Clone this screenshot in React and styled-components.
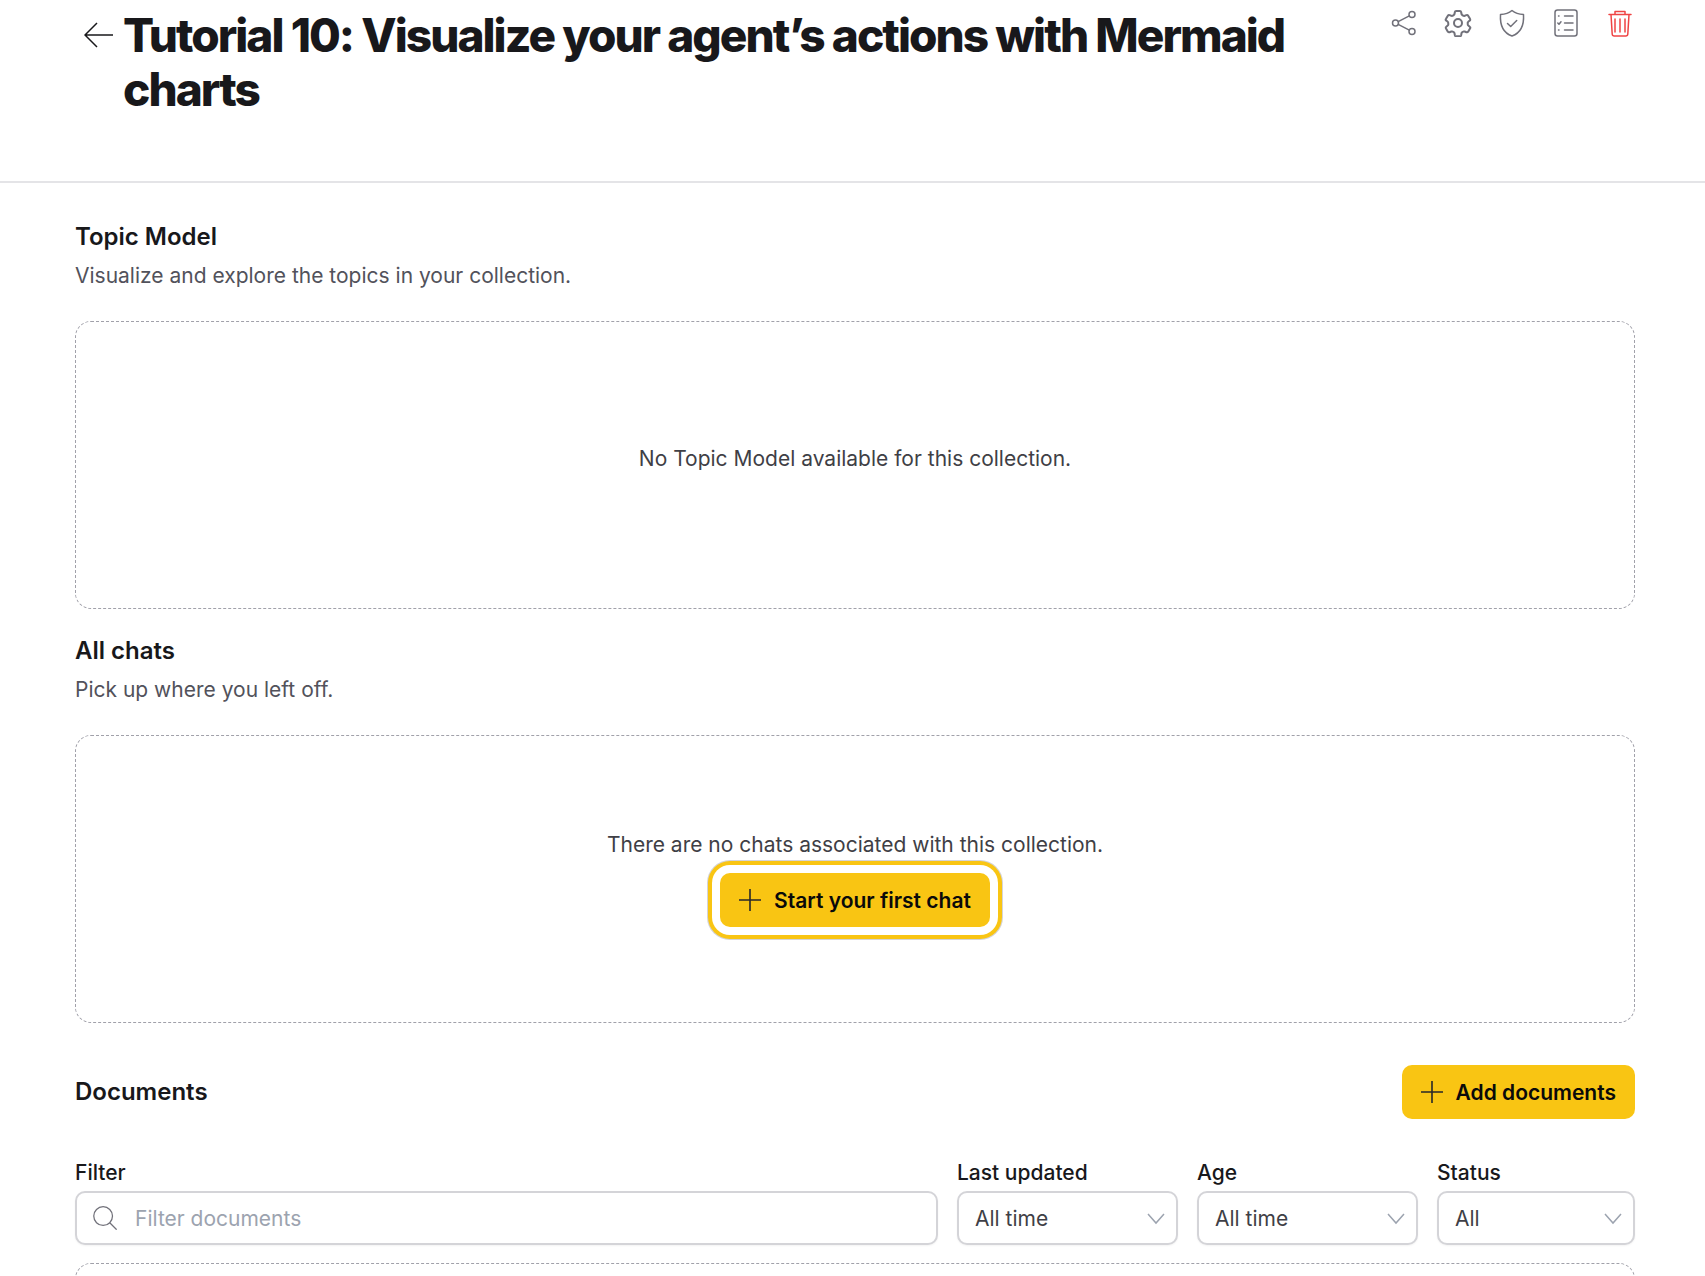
import React from 'react';
import styled, { createGlobalStyle } from 'styled-components';
import { HiOutlineMagnifyingGlass } from 'react-icons/hi2';

const Global = createGlobalStyle`
  html, body { margin: 0; padding: 0; background: #fff; height: 1276px; overflow: hidden; }
  body { font-family: Inter, "Liberation Sans", sans-serif; color: #18181b; }
  * { box-sizing: border-box; }
`;

const Header = styled.header`
  height: 183px;
  border-bottom: 2px solid #e4e4e7;
  padding: 8px 70px 0 84px;
  display: flex;
  align-items: flex-start;
`;
const BackIcon = styled.svg`
  width: 30px;
  height: 30px;
  margin-top: 12px;
  margin-right: 9px;
  flex: none;
  fill: none;
  stroke: #18181b;
  stroke-width: 1.5;
`;
const Title = styled.h1`
  margin: 0;
  width: 1240px;
  flex: none;
  font-size: 46px;
  line-height: 54px;
  font-weight: 800;
  letter-spacing: -0.0425em;
  color: #18181b;
`;
const Actions = styled.div`
  margin-left: auto;
  margin-right: 1px;
  margin-top: 1px;
  display: flex;
  gap: 26px;
`;
const ActionIcon = styled.svg`
  width: 28px;
  height: 28px;
  flex: none;
  fill: none;
  stroke: ${p => (p.$danger ? '#ef4444' : '#71717a')};
  stroke-width: 1.5;
  stroke-linecap: round;
  stroke-linejoin: round;
`;

const Main = styled.main`
  padding: 38px 70px 0 75px;
`;
const SectionTitle = styled.h2`
  margin: 0;
  font-size: 24px;
  line-height: 32px;
  font-weight: 600;
  color: #18181b;
`;
const SectionText = styled.p`
  margin: 8px 0 0;
  font-size: 21px;
  line-height: 30px;
  color: #52525b;
`;
const EmptyBox = styled.div`
  margin-top: ${p => p.$mt || 30}px;
  height: ${p => p.$h || 288}px;
  padding-bottom: ${p => p.$pb || 0}px;
  border: 1px dashed #a1a1aa;
  border-radius: 16px;
  display: flex;
  flex-direction: column;
  align-items: center;
  justify-content: center;
  font-size: 21px;
  line-height: 28px;
  color: #3f3f46;
`;
const ChatsSection = styled.section`
  margin-top: 26px;
`;
const DocsHead = styled.div`
  margin-top: 42px;
  display: flex;
  justify-content: space-between;
  align-items: center;
`;
const YellowButton = styled.button`
  height: 54px;
  padding: 0 19px 0 16px;
  display: inline-flex;
  align-items: center;
  gap: 10px;
  border: 0;
  border-radius: 10px;
  background: #f9c513;
  color: #0a0a0a;
  font: 600 21px Inter, sans-serif;
  ${p => p.$ring && `
    margin-top: 14px;
    box-shadow: 0 0 0 8px #fff, 0 0 0 12px #f9c513, 0 0 0 13px #d4d4d8;
  `}
`;
const PlusIcon = styled.svg`
  width: 28px;
  height: 28px;
  stroke: #27272a;
  stroke-width: 1.6;
  fill: none;
`;
const Filters = styled.div`
  margin-top: 40px;
  display: flex;
  gap: 19px;
`;
const Field = styled.label`
  display: flex;
  flex-direction: column;
  width: ${p => (p.$w ? `${p.$w}px` : 'auto')};
  flex: ${p => (p.$w ? 'none' : 1)};
`;
const FieldLabel = styled.span`
  font-size: 21px;
  line-height: 28px;
  font-weight: 500;
  color: #18181b;
  margin-bottom: 4px;
`;
const Control = styled.div`
  height: 54px;
  border: 2px solid #d4d4d8;
  border-radius: 10px;
  padding: 0 16px;
  display: flex;
  align-items: center;
  background: #fff;
  box-shadow: 0 1px 2px rgba(0, 0, 0, 0.05);
  font-size: 21px;
  color: #3f3f46;
`;
const SearchIcon = styled(HiOutlineMagnifyingGlass)`
  width: 30px;
  height: 30px;
  color: #71717a;
  stroke-width: 1;
  margin-left: -3px;
  margin-right: 15px;
  flex: none;
`;
const Placeholder = styled.span`
  color: #9ca3af;
`;
const Chevron = styled.svg`
  margin-left: auto;
  margin-right: -6px;
  width: 20px;
  height: 20px;
  fill: none;
  stroke: #9ca3af;
  stroke-width: 1.5;
`;

const Plus = () => (
  <PlusIcon viewBox="0 0 28 28"><path d="M14 3v22M3 14h22" /></PlusIcon>
);
const Down = () => (
  <Chevron viewBox="0 0 20 20"><path d="M2 6l8 9 8-9" /></Chevron>
);
const Select = ({ label, value, w }) => (
  <Field $w={w}>
    <FieldLabel>{label}</FieldLabel>
    <Control>{value}<Down /></Control>
  </Field>
);

export default function App() {
  return (
    <>
      <Global />
      <Header>
        <BackIcon viewBox="0 0 30 30"><path d="M29 15H1M13 3L1 15l12 12" /></BackIcon>
        <Title>Tutorial 10: Visualize your agent’s actions with Mermaid charts</Title>
        <Actions>
          <ActionIcon viewBox="0 0 28 28">
            <circle cx="5.5" cy="14" r="3" /><circle cx="22" cy="5.5" r="3" /><circle cx="22" cy="22.5" r="3" />
            <path d="M8.2 12.6l11.1-5.7M8.2 15.4l11.1 5.7" />
          </ActionIcon>
          <ActionIcon viewBox="1.5 1.5 21 21">
            <path d="M9.6 3.9c.1-.5.5-.9 1-.9h2.8c.5 0 .9.4 1 .9l.2 1.4c.1.4.4.7.7.9l.6.3c.3.2.8.2 1.1.1l1.3-.5c.5-.2 1-.0 1.3.4l1.4 2.4c.2.4.2 1-.2 1.3l-1.1.9c-.3.2-.5.6-.4 1v.8c0 .4.1.8.4 1l1.1.9c.4.3.5.9.2 1.3l-1.4 2.4c-.3.4-.8.6-1.3.4l-1.3-.5c-.4-.1-.8-.1-1.1.1l-.6.3c-.3.2-.6.5-.7.9l-.2 1.4c-.1.5-.5.9-1 .9h-2.8c-.5 0-.9-.4-1-.9l-.2-1.4c-.1-.4-.4-.7-.7-.9l-.6-.3c-.3-.2-.8-.2-1.1-.1l-1.3.5c-.5.2-1 0-1.3-.4l-1.4-2.4c-.2-.4-.2-1 .2-1.3l1.1-.9c.3-.2.5-.6.4-1v-.8c0-.4-.1-.8-.4-1l-1.1-.9c-.4-.3-.5-.9-.2-1.3l1.4-2.4c.3-.4.8-.6 1.3-.4l1.3.5c.4.1.8.1 1.1-.1l.6-.3c.3-.2.6-.5.7-.9z" />
            <circle cx="12" cy="12" r="3" />
          </ActionIcon>
          <ActionIcon viewBox="0 0 28 28">
            <path d="M14 1.500c3 2.500 7 3.800 11.500 4 .6 9.500-1.500 18-11.500 21.500C4 23.500 1.900 15 2.500 5.500c4.500-.2 8.500-1.500 11.500-4z" />
            <path d="M9.500 14.500l3.200 3 6-6" />
          </ActionIcon>
          <ActionIcon viewBox="0 0 28 28">
            <rect x="3" y="1" width="22" height="26" rx="2.500" />
            <path d="M12.500 7H21M12.500 14H21M12.500 21H21M6.500 7h.5M6.500 21h.5M5.800 14l1.200 1.200 2-2.400" />
          </ActionIcon>
          <ActionIcon $danger viewBox="0 0 28 28">
            <path d="M3 5.500h22M9 5.500V2.500h10v3M5 5.500l1.200 19.500c.1 1.200.8 2 2 2h11.600c1.200 0 1.900-.8 2-2L23 5.500M9 10v13M14 10v13M19 10v13" />
          </ActionIcon>
        </Actions>
      </Header>
      <Main>
        <section>
          <SectionTitle>Topic Model</SectionTitle>
          <SectionText>Visualize and explore the topics in your collection.</SectionText>
          <EmptyBox $pb={12}>No Topic Model available for this collection.</EmptyBox>
        </section>
        <ChatsSection>
          <SectionTitle>All chats</SectionTitle>
          <SectionText>Pick up where you left off.</SectionText>
          <EmptyBox>
            There are no chats associated with this collection.
            <YellowButton $ring><Plus />Start your first chat</YellowButton>
          </EmptyBox>
        </ChatsSection>
        <section>
          <DocsHead>
            <SectionTitle>Documents</SectionTitle>
            <YellowButton><Plus />Add documents</YellowButton>
          </DocsHead>
          <Filters>
            <Field>
              <FieldLabel>Filter</FieldLabel>
              <Control>
                <SearchIcon />
                <Placeholder>Filter documents</Placeholder>
              </Control>
            </Field>
            <Select label="Last updated" value="All time" w={221} />
            <Select label="Age" value="All time" w={221} />
            <Select label="Status" value="All" w={198} />
          </Filters>
          <EmptyBox $mt={18} $h={200} />
        </section>
      </Main>
    </>
  );
}
